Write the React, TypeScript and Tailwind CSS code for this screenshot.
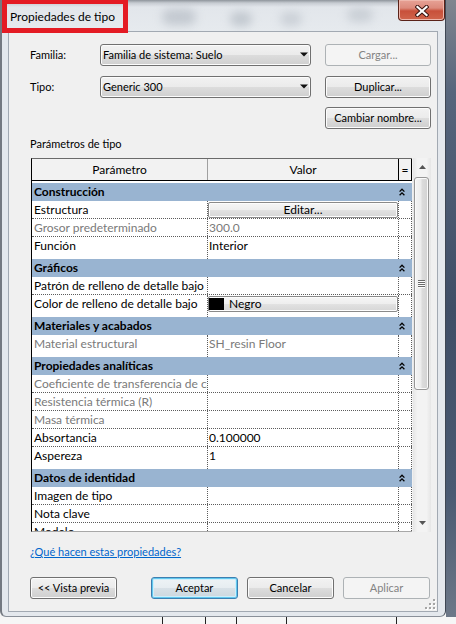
import React from "react";

type Val =
  | { kind: "text"; text: string; gray?: boolean }
  | { kind: "button"; text: string }
  | { kind: "color"; text: string }
  | { kind: "empty" };

interface Row {
  p: string;
  gray?: boolean;
  v: Val;
}
interface Group {
  name: string;
  rows: Row[];
}

const E: Val = { kind: "empty" };

const groups: Group[] = [
  {
    name: "Construcción",
    rows: [
      { p: "Estructura", v: { kind: "button", text: "Editar..." } },
      { p: "Grosor predeterminado", gray: true, v: { kind: "text", text: "300.0", gray: true } },
      { p: "Función", v: { kind: "text", text: "Interior" } },
    ],
  },
  {
    name: "Gráficos",
    rows: [
      { p: "Patrón de relleno de detalle bajo", v: E },
      { p: "Color de relleno de detalle bajo", v: { kind: "color", text: "Negro" } },
    ],
  },
  {
    name: "Materiales y acabados",
    rows: [{ p: "Material estructural", gray: true, v: { kind: "text", text: "SH_resin Floor", gray: true } }],
  },
  {
    name: "Propiedades analíticas",
    rows: [
      { p: "Coeficiente de transferencia de calor (U)", gray: true, v: E },
      { p: "Resistencia térmica (R)", gray: true, v: E },
      { p: "Masa térmica", gray: true, v: E },
      { p: "Absortancia", v: { kind: "text", text: "0.100000" } },
      { p: "Aspereza", v: { kind: "text", text: "1" } },
    ],
  },
  {
    name: "Datos de identidad",
    rows: [
      { p: "Imagen de tipo", v: E },
      { p: "Nota clave", v: E },
      { p: "Modelo", v: E },
    ],
  },
];

function WinButton({
  label,
  disabled,
  primary,
  className,
}: {
  label: string;
  disabled?: boolean;
  primary?: boolean;
  className: string;
}) {
  let look =
    "border-[#707070] bg-[linear-gradient(to_bottom,#f2f2f2_0%,#ebebeb_50%,#dddddd_50%,#cfcfcf_100%)] shadow-[inset_0_0_0_1px_#fcfcfc] text-black";
  if (disabled) look = "border-[#adb2b5] bg-[#f4f4f4] text-[#838383]";
  if (primary)
    look =
      "border-[#3c7fb1] bg-[linear-gradient(to_bottom,#eef3f6_0%,#e6edf1_50%,#d8e1e7_50%,#ccd7de_100%)] shadow-[inset_0_0_0_1px_#62c8ee,inset_0_0_0_2px_#cdeefb] text-black";
  return (
    <div
      className={
        "h-[22px] flex items-center justify-center rounded-[3px] border text-[11px] leading-[16px] shrink-0 " +
        look +
        " " +
        className
      }
    >
      {label}
    </div>
  );
}

function Dropdown({ text }: { text: string }) {
  return (
    <div className="w-[211px] h-[22px] shrink-0 rounded-[3px] border border-[#707070] bg-[linear-gradient(to_bottom,#f2f2f2_0%,#ebebeb_50%,#dddddd_50%,#cfcfcf_100%)] shadow-[inset_0_0_0_1px_#fcfcfc] flex items-center pl-[2px] pr-[2px]">
      <span className="flex-1 text-[11px] leading-[16px] whitespace-nowrap">{text}</span>
      <svg width="8" height="5" viewBox="0 0 8 5" className="mb-[1px]">
        <polygon points="0,0.5 8,0.5 4,4.5" fill="#111" />
      </svg>
    </div>
  );
}

function Chevron() {
  return (
    <svg width="6" height="8" viewBox="0 0 6 8">
      <polyline points="0.6,3.6 3,1.2 5.4,3.6" fill="none" stroke="#000" strokeWidth="1.3" />
      <polyline points="0.6,7.2 3,4.8 5.4,7.2" fill="none" stroke="#000" strokeWidth="1.3" />
    </svg>
  );
}

function GroupHeader({ name }: { name: string }) {
  return (
    <div className="h-[18px] shrink-0 flex bg-[#99b4d1]">
      <div className="w-[366px] pl-[2px] font-bold leading-[18px] whitespace-nowrap overflow-hidden">{name}</div>
      <div className="w-[14px] flex items-center pl-[1px]">
        <Chevron />
      </div>
    </div>
  );
}

function CellButton({ children }: { children: React.ReactNode }) {
  return (
    <div className="mt-[1px] h-[16px] rounded-[2px] border border-[#8a8a8a] bg-[linear-gradient(to_bottom,#f6f6f6_0%,#eeeeee_50%,#e2e2e2_50%,#d6d6d6_100%)] shadow-[inset_0_0_0_1px_#fdfdfd] flex items-center leading-[14px]">
      {children}
    </div>
  );
}

function Value({ v }: { v: Val }) {
  if (v.kind === "button")
    return (
      <CellButton>
        <span className="flex-1 text-center">{v.text}</span>
      </CellButton>
    );
  if (v.kind === "color")
    return (
      <CellButton>
        <span className="w-[15px] h-[12px] bg-black ml-[0px]" />
        <span className="ml-[5px]">{v.text}</span>
      </CellButton>
    );
  if (v.kind === "text")
    return (
      <div className={"pl-[1px] leading-[17px] whitespace-nowrap overflow-hidden " + (v.gray ? "text-[#7a7a7a]" : "")}>
        {v.text}
      </div>
    );
  return null;
}

function PropRow({ row, last }: { row: Row; last: boolean }) {
  return (
    <div
      className={
        "flex shrink-0 " + (last ? "h-[22px]" : "h-[18px] border-b border-dotted border-[#5c5c5c]")
      }
    >
      <div
        className={
          "w-[176px] pl-[2px] border-r border-dotted border-[#5c5c5c] leading-[17px] whitespace-nowrap overflow-hidden " +
          (row.gray ? "text-[#7a7a7a]" : "")
        }
      >
        {row.p}
      </div>
      <div className="w-[191px] border-r border-dotted border-[#5c5c5c] overflow-hidden">
        <Value v={row.v} />
      </div>
      <div className="w-[13px] border-r border-dotted border-[#5c5c5c]" />
    </div>
  );
}

function Scrollbar() {
  return (
    <div className="ml-[1px] w-[18px] h-full flex flex-col bg-[linear-gradient(to_right,#e6e6e6_0%,#f3f3f3_25%,#f3f3f3_75%,#e6e6e6_100%)]">
      <div className="h-[18px] shrink-0 flex items-center justify-center">
        <svg width="7" height="4" viewBox="0 0 7 4">
          <polygon points="0,4 7,4 3.5,0" fill="#555" />
        </svg>
      </div>
      <div className="flex-1 flex flex-col">
        <div className="mt-[1px] ml-[1px] w-[15px] h-[213px] rounded-[3px] border border-[#979797] bg-[linear-gradient(to_right,#f5f5f5_0%,#ececec_45%,#dcdcdc_55%,#d2d2d2_100%)] shadow-[inset_0_0_0_1px_#fafafa] flex items-center justify-center">
          <svg width="7" height="8" viewBox="0 0 7 8">
            <rect x="0" y="0" width="7" height="1" fill="#6a6a6a" />
            <rect x="0" y="2" width="7" height="1" fill="#6a6a6a" />
            <rect x="0" y="4" width="7" height="1" fill="#6a6a6a" />
            <rect x="0" y="6" width="7" height="1" fill="#6a6a6a" />
            <rect x="0" y="1" width="7" height="1" fill="#fdfdfd" />
            <rect x="0" y="3" width="7" height="1" fill="#fdfdfd" />
            <rect x="0" y="5" width="7" height="1" fill="#fdfdfd" />
            <rect x="0" y="7" width="7" height="1" fill="#fdfdfd" />
          </svg>
        </div>
      </div>
      <div className="h-[18px] shrink-0 flex items-center justify-center">
        <svg width="7" height="4" viewBox="0 0 7 4">
          <polygon points="0,0 7,0 3.5,4" fill="#555" />
        </svg>
      </div>
    </div>
  );
}

function PropertyGrid() {
  return (
    <div className="ml-[22px] mt-[6px] w-[400px] h-[374px] shrink-0 flex text-[12px]">
      <div className="w-[381px] h-full flex flex-col border-l border-l-black border-t border-t-[#6a6a6a] border-b border-b-[#a8a8a8]">
        <div className="h-[22px] shrink-0 flex border-b border-black bg-[#f2f2f2]">
          <div className="w-[176px] border-r border-[#a0a0a0] flex items-center justify-center leading-[16px]">
            Parámetro
          </div>
          <div className="w-[190px] flex items-center justify-center leading-[16px]">Valor</div>
          <div className="w-[14px] border-x border-black flex items-center justify-center leading-[16px]">=</div>
        </div>
        <div className="flex-1 bg-white overflow-hidden pt-[2px] flex flex-col">
          {groups.map((g) => (
            <React.Fragment key={g.name}>
              <GroupHeader name={g.name} />
              {g.rows.map((r, i) => (
                <PropRow key={r.p} row={r} last={i === g.rows.length - 1} />
              ))}
            </React.Fragment>
          ))}
        </div>
      </div>
      <Scrollbar />
    </div>
  );
}

function ResizeGrip() {
  return (
    <svg width="12" height="12" viewBox="0 0 12 12" className="absolute right-[1px] bottom-[1px]">
      {[
        [9, 1],
        [9, 5],
        [5, 5],
        [9, 9],
        [5, 9],
        [1, 9],
      ].map(([x, y]) => (
        <g key={x + "-" + y}>
          <rect x={x + 1} y={y + 1} width="2" height="2" fill="#ffffff" />
          <rect x={x} y={y} width="2" height="2" fill="#a5a5a5" />
        </g>
      ))}
    </svg>
  );
}

function Client() {
  return (
    <div className="ml-[6px] mr-[7px] h-[581px] shrink-0 border border-[#a2a9b2] bg-[#f0f0f0] relative flex flex-col text-[11px]">
      <div className="mt-[12px] h-[22px] flex items-center">
        <div className="ml-[21px] w-[70px] leading-[16px]">Familia:</div>
        <Dropdown text="Familia de sistema: Suelo" />
        <WinButton label="Cargar..." disabled className="ml-[14px] w-[106px]" />
      </div>
      <div className="mt-[10px] h-[22px] flex items-center">
        <div className="ml-[21px] w-[70px] leading-[16px]">Tipo:</div>
        <Dropdown text="Generic 300" />
        <WinButton label="Duplicar..." className="ml-[14px] w-[106px]" />
      </div>
      <div className="mt-[9px] h-[22px] flex items-center pl-[316px]">
        <WinButton label="Cambiar nombre..." className="w-[106px]" />
      </div>
      <div className="mt-[7px] h-[16px] ml-[21px] leading-[16px]">Parámetros de tipo</div>
      <PropertyGrid />
      <div className="mt-[12px] h-[16px] ml-[21px] leading-[16px]">
        <span className="text-[#0066cc] underline">¿Qué hacen estas propiedades?</span>
      </div>
      <div className="mt-[17px] h-[22px] flex items-center">
        <WinButton label="<< Vista previa" className="ml-[21px] w-[87px]" />
        <WinButton label="Aceptar" primary className="ml-[34px] w-[87px]" />
        <WinButton label="Cancelar" className="ml-[9px] w-[87px]" />
        <WinButton label="Aplicar" disabled className="ml-[9px] w-[87px]" />
      </div>
      <ResizeGrip />
    </div>
  );
}

function CloseButton() {
  return (
    <div className="w-[47px] h-[21px] shrink-0 self-start rounded-b-[4px] border border-t-0 border-[#5a2218] bg-[linear-gradient(to_bottom,#e7a296_0%,#dc8a7c_40%,#c8503a_55%,#d0654c_100%)] shadow-[inset_0_0_0_1px_#eeb7ac] flex items-center justify-center pt-[2px]">
      <svg width="14" height="12" viewBox="0 0 14 12">
        <path d="M2.5 2 L11.5 10 M11.5 2 L2.5 10" stroke="#3a1410" strokeWidth="4.2" strokeLinecap="square" />
        <path d="M2.5 2 L11.5 10 M11.5 2 L2.5 10" stroke="#ffffff" strokeWidth="2.2" strokeLinecap="square" />
      </svg>
    </div>
  );
}

function TitleBar() {
  return (
    <div className="h-[31px] shrink-0 relative flex bg-[linear-gradient(to_bottom,#8e949b_0px,#c7ccd2_3px,#e2e6eb_7px,#e6eaee_100%)]">
      <div className="absolute left-[160px] top-[9px] w-[34px] h-[16px] rounded-full bg-[#aeb5be] blur-[5px] opacity-60" />
      <div className="absolute left-[228px] top-[12px] w-[22px] h-[14px] rounded-full bg-[#aab2bb] blur-[5px] opacity-60" />
      <div className="absolute left-[278px] top-[12px] w-[22px] h-[14px] rounded-full bg-[#b2b9c2] blur-[5px] opacity-50" />
      <div className="absolute left-[345px] top-[8px] w-[26px] h-[14px] rounded-full bg-[#b0b7c0] blur-[5px] opacity-50" />
      <div className="relative pl-[8px] pt-[9px] text-[12px] leading-[16px] whitespace-nowrap">Propiedades de tipo</div>
      <div className="flex-1" />
      <CloseButton />
    </div>
  );
}

function Window() {
  return (
    <div className="w-[446px] h-[617px] shrink-0 flex flex-col bg-[#e4e8ed] border-l-[2px] border-l-[#747981] border-r border-r-[#3f4753] border-b border-b-[#8a9099] rounded-bl-[6px] rounded-br-[6px] overflow-hidden">
      <TitleBar />
      <Client />
    </div>
  );
}

export default function App() {
  return (
    <div className="relative w-[456px] h-[624px] overflow-hidden flex flex-col bg-[#f4f4f4] font-['Lato',sans-serif] text-black">
      <div className="flex h-[617px] shrink-0 bg-[#f4f4f4]">
        <Window />
        <div className="flex-1 bg-[linear-gradient(to_bottom,#80868f_0%,#56657c_15%,#3f4e66_50%,#4a5a72_80%,#6d7888_100%)]" />
      </div>
      <svg width="456" height="7" viewBox="0 0 456 7" className="shrink-0">
        <rect x="0" y="0" width="456" height="7" fill="#f6f6f6" />
        {[162, 205, 236, 286, 396].map((x) => (
          <rect key={x} x={x} y="0" width="1" height="7" fill="#222" />
        ))}
      </svg>
      <div className="absolute left-[2px] top-[-1px] w-[126px] h-[34px] border-[5px] border-[#e41b24]" />
    </div>
  );
}
